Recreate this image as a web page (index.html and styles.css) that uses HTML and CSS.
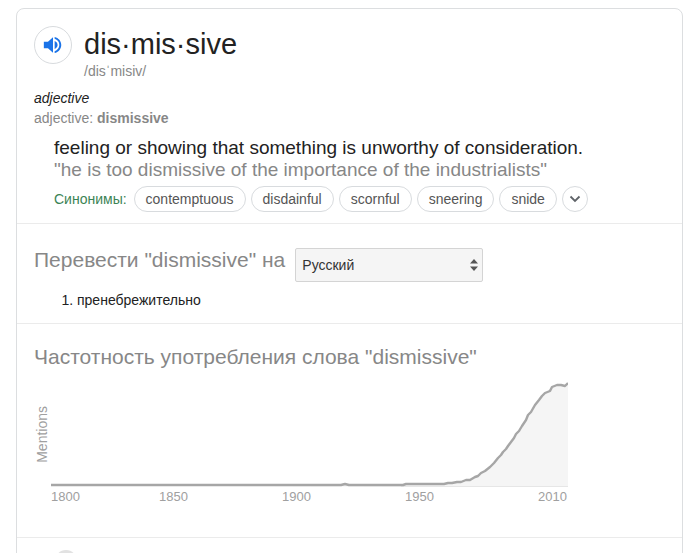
FILE: index.html
```html
<!DOCTYPE html>
<html lang="ru">
<head>
<meta charset="utf-8">
<meta name="viewport" content="width=device-width, initial-scale=1">
<title>dismissive</title>
<link rel="stylesheet" href="styles.css">
</head>
<body>
<main class="card">
  <section class="entry">
    <header class="word">
      <button class="speak" type="button" aria-label="Произношение">
        <svg viewBox="0 0 24 24" width="22" height="22" aria-hidden="true"><path fill="#1a73e8" d="M2 8.500v7h4.500l5.500 5V3.500l-5.500 5H2zM17 12c0-1.770-1.200-3.600-3.200-4.300v8.600c2-.700 3.200-2.530 3.200-4.300zM13.800 3.200v2.100c3.100.900 5.100 3.600 5.100 6.700s-2 5.800-5.100 6.700v2.100c4.200-.900 7.200-4.500 7.200-8.800s-3-7.900-7.200-8.800z"/></svg>
      </button>
      <h1 class="title">dis·mis·sive</h1>
      <p class="phonetic">/disˈmisiv/</p>
    </header>
    <p class="pos"><em>adjective</em></p>
    <p class="forms">adjective: <b>dismissive</b></p>
    <div class="sense">
      <p class="definition">feeling or showing that something is unworthy of consideration.</p>
      <p class="example">"he is too dismissive of the importance of the industrialists"</p>
      <div class="synonyms">
        <span class="synonyms-label">Синонимы:</span>
        <button class="chip" type="button">contemptuous</button>
        <button class="chip" type="button">disdainful</button>
        <button class="chip" type="button">scornful</button>
        <button class="chip" type="button">sneering</button>
        <button class="chip" type="button">snide</button>
        <button class="chip more" type="button" aria-label="Ещё">
          <svg viewBox="0 0 12 8" width="12" height="8" aria-hidden="true"><path d="M1.500 1.500L6 6l4.500-4.500" fill="none" stroke="#5f6368" stroke-width="1.800"/></svg>
        </button>
      </div>
    </div>
  </section>

  <section class="translate">
    <div class="translate-row">
      <label class="heading" for="language">Перевести "dismissive" на</label>
      <div class="picker">
        <select id="language"><option>Русский</option></select>
        <svg class="arrows" viewBox="0 0 8 12" width="8" height="12" aria-hidden="true"><path d="M0 4.500L4 0l4 4.500zM0 7.500L4 12l4-4.500z" fill="#555"/></svg>
      </div>
    </div>
    <ol class="translations"><li>пренебрежительно</li></ol>
  </section>

  <section class="usage">
    <h2 class="heading">Частотность употребления слова "dismissive"</h2>
    <div class="chart">
      <span class="y-label">Mentions</span>
      <svg class="plot" viewBox="0 0 517 108" role="img" aria-label="Mentions, 1800–2010">
        <path fill="#f5f5f5" d="M0 105H354L393 104 415 100 427 96 439 87 450 75 460 62 471 46 484 25 494 13 501 7 506 5 514 6 517 3V107H350z"/>
        <path fill="none" stroke="#e6e6e6" d="M350 106.500H517"/>
        <path fill="none" stroke="#a6a6a6" stroke-width="2.400" stroke-linejoin="round" d="M0 105H290L294 104 298 105H352L355 104H393L397 103H401L406 102H410L415 100H419L424 97 427 96 430 93 434 91 439 87 443 83 447 78 450 75 452 72 455 69 457 66 460 62 463 58 465 54 468 51 471 46 475 40 477 35 480 32 484 25 488 20 491 16 494 13 499 11 501 7 506 5H510L514 6 517 3"/>
      </svg>
      <div class="years"><span>1800</span><span>1850</span><span>1900</span><span>1950</span><span>2010</span></div>
    </div>
  </section>

  <footer class="next"><span class="disc"></span></footer>
</main>
</body>
</html>
```
FILE: styles.css
```css
* {
  box-sizing: border-box;
}

body {
  margin: 0;
  padding: 8px 17px 0 16px;
  background: #fff;
  color: #222;
  font: 14px/20px "Liberation Sans", Arial, sans-serif;
  overflow: hidden;
}

h1, h2, p, ol {
  margin: 0;
  font-weight: 400;
}

button {
  font: inherit;
  color: inherit;
  background: #fff;
  border: 1px solid #d8dbde;
  padding: 0;
}

.card {
  border: 1px solid #dcdee0;
  border-radius: 8px;
}

.entry {
  padding: 17px 17px 11px;
}

.word {
  display: grid;
  grid-template-columns: 38px 1fr;
  column-gap: 12px;
}

.speak {
  display: grid;
  place-items: center;
  width: 38px;
  height: 38px;
  border-radius: 50%;
}

.title {
  font-size: 29px;
  line-height: 36px;
}

.phonetic {
  grid-column: 2;
  margin-top: -2px;
  line-height: 18px;
  color: #878787;
}

.pos {
  margin-top: 8px;
}

.forms {
  color: #878787;
}

.sense {
  padding: 9px 0 0 20px;
}

.definition,
.example {
  font-size: 19px;
  line-height: 22px;
}

.example {
  color: #878787;
}

.synonyms {
  display: flex;
  flex-wrap: wrap;
  align-items: center;
  gap: 5px;
  margin-top: 5px;
}

.synonyms-label {
  margin-right: 2px;
  color: #3c8455;
}

.chip {
  height: 26px;
  padding: 0 11px;
  border-radius: 13px;
  color: #555;
}

.more {
  display: grid;
  place-items: center;
  width: 26px;
  padding: 0;
}

.translate,
.usage,
.next {
  border-top: 1px solid #ebebeb;
}

.translate {
  padding: 24px 17px 13px;
}

.translate-row {
  display: flex;
  flex-wrap: wrap;
  align-items: flex-start;
  gap: 10px;
}

.heading {
  font-size: 21px;
  line-height: 24px;
  color: #878787;
}

.picker {
  position: relative;
}

.picker select {
  appearance: none;
  display: block;
  width: 188px;
  height: 34px;
  padding: 0 24px 0 6px;
  border: 1px solid #d4d4d4;
  border-radius: 2px;
  background: #f5f5f5;
  color: #333;
  font: inherit;
}

.arrows {
  position: absolute;
  right: 5px;
  top: 11px;
  pointer-events: none;
}

.translations {
  margin-top: 8px;
  padding-left: 43px;
}

.usage {
  padding: 21px 17px 32px;
}

.chart {
  display: grid;
  grid-template-columns: 17px minmax(0, 517px);
  margin-top: 11px;
  font-size: 13px;
  line-height: 16px;
  color: #a0a0a0;
}

.y-label {
  align-self: center;
  writing-mode: vertical-rl;
  transform: rotate(180deg);
  font-size: 14px;
}

.plot {
  display: block;
  width: 100%;
}

.years {
  grid-column: 2;
  display: grid;
  grid-template-columns: 108fr 123fr 123fr 133fr 30px;
  padding-top: 1px;
}

.next {
  display: flex;
  padding: 12px 38px;
}

.disc {
  width: 22px;
  height: 22px;
  border-radius: 50%;
  background: #e2e2e2;
}
```
